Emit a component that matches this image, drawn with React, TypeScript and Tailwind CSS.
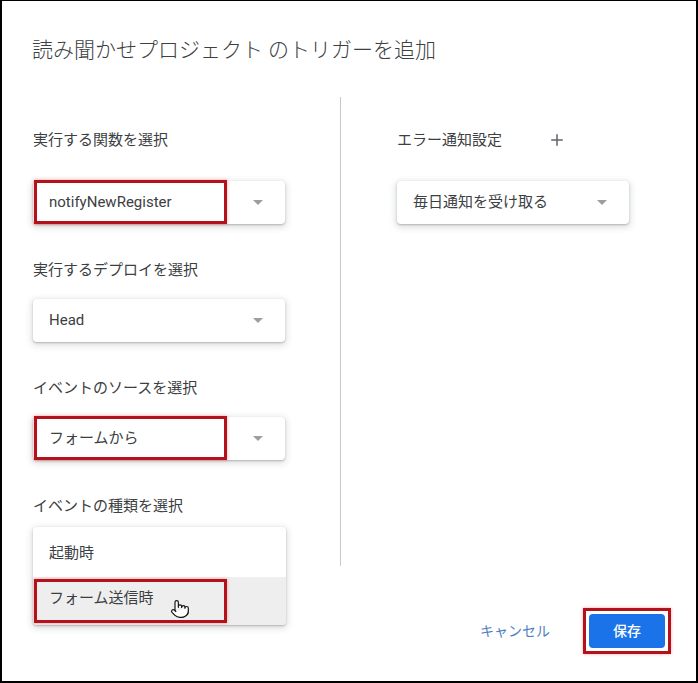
import { Plus, Pointer } from 'lucide-react';

const FONT = "font-['Roboto','Noto_Sans_CJK_JP',sans-serif]";

function Caret() {
  return (
    <span className="w-0 h-0 border-l-[5px] border-r-[5px] border-t-[5px] border-l-transparent border-r-transparent border-t-[#9e9e9e]" />
  );
}

function Select({ value, marked, width = 'w-[252px]' }: { value: string; marked?: boolean; width?: string }) {
  return (
    <div
      className={`relative ${width} h-[43px] bg-white rounded-[4px] flex items-center justify-between pl-[16px] pr-[22px] shadow-[0_1px_2px_rgba(60,64,67,0.3),0_2px_6px_2px_rgba(60,64,67,0.15)]`}
    >
      <span className="text-[15px] text-[#3c4043]">{value}</span>
      <Caret />
      {marked && (
        <div className="absolute left-[1px] top-[-1px] w-[193px] h-[44px] border-[3px] border-[#b3121c] shadow-[0_0_3px_rgba(255,60,60,0.45)]" />
      )}
    </div>
  );
}

export default function App() {
  return (
    <div className={`w-[698px] h-[683px] bg-white border-l-2 border-r-2 border-b-2 border-t border-black flex flex-col ${FONT}`}>
      {/* title */}
      <h1 className="pl-[30px] pt-[35px] text-[21px] leading-[28px] font-light text-[#3c4043] whitespace-pre">
        読み聞かせプロジェクト のトリガーを追加
      </h1>

      <div className="flex flex-1 mt-[33px] pl-[31px] pr-[31px] pb-[33px]">
        {/* left column */}
        <div className="w-[253px] flex flex-col">
          <p className="mt-[33px] text-[15px] leading-[20px] text-[#3c4043]">実行する関数を選択</p>
          <div className="mt-[31px]">
            <Select value="notifyNewRegister" marked />
          </div>

          <p className="mt-[36px] text-[15px] leading-[20px] text-[#3c4043]">実行するデプロイを選択</p>
          <div className="mt-[19px]">
            <Select value="Head" />
          </div>

          <p className="mt-[36px] text-[15px] leading-[20px] text-[#3c4043]">イベントのソースを選択</p>
          <div className="mt-[19px]">
            <Select value="フォームから" marked />
          </div>

          <p className="mt-[36px] text-[15px] leading-[20px] text-[#3c4043]">イベントの種類を選択</p>
          <div className="mt-[11px] w-[253px] h-[98px] bg-white rounded-[4px] pt-[2px] shadow-[0_1px_2px_rgba(60,64,67,0.3),0_2px_6px_2px_rgba(60,64,67,0.15)]">
            <div className="h-[48px] flex items-center pl-[16px] text-[15px] text-[#3c4043]">起動時</div>
            <div className="relative h-[48px] flex items-center pl-[16px] pb-[6px] bg-[#eeeeee] rounded-b-[4px] text-[15px] text-[#3c4043]">
              フォーム送信時
              <div className="absolute left-[1px] top-[2px] w-[193px] h-[44px] border-[3px] border-[#b3121c] shadow-[0_0_3px_rgba(255,60,60,0.45)]" />
              <Pointer size={20} strokeWidth={1.4} fill="white" color="#111" className="absolute left-[137px] top-[22px]" />
            </div>
          </div>
        </div>

        {/* divider */}
        <div className="ml-[54px] w-px h-[469px] bg-[#c8c8c8] shrink-0" />

        {/* right column */}
        <div className="ml-[56px] flex-1 flex flex-col">
          <div className="mt-[33px] h-[20px] flex items-center">
            <span className="text-[15px] leading-[20px] text-[#3c4043]">エラー通知設定</span>
            <Plus size={18} strokeWidth={2} color="#5f6368" className="ml-[46px]" />
          </div>
          <div className="mt-[31px]">
            <Select value="毎日通知を受け取る" width="w-[232px]" />
          </div>

          <div className="mt-auto flex items-center justify-end">
            <button className="text-[14px] text-[#4f7fc0] mr-[39px]">キャンセル</button>
            <div className="relative">
              <button className="w-[76px] h-[34px] rounded-[4px] bg-[#1a73e8] text-white text-[14px] font-medium">保存</button>
              <div className="absolute left-[-6px] top-[-6px] w-[88px] h-[46px] border-[3px] border-[#b3121c] shadow-[0_0_3px_rgba(255,60,60,0.45)]" />
            </div>
          </div>
        </div>
      </div>
    </div>
  );
}
